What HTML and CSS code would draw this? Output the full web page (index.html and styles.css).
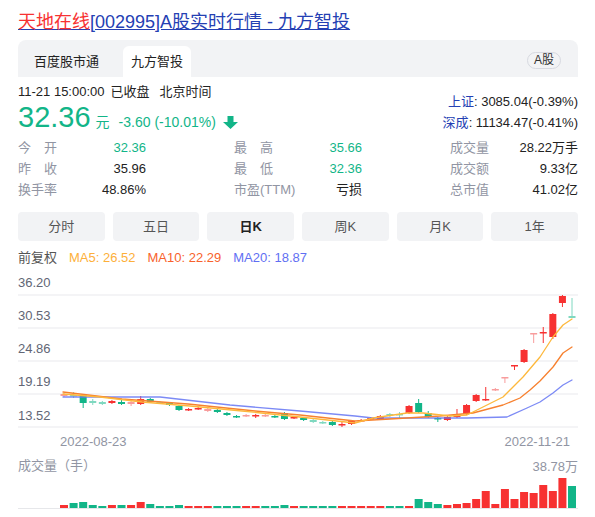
FILE: index.html
```html
<!DOCTYPE html>
<html lang="zh-CN">
<head>
<meta charset="utf-8">
<title>天地在线[002995]A股实时行情 - 九方智投</title>
<link rel="stylesheet" href="styles.css">
</head>
<body>
<div class="page">
  <h3 class="title"><a href="#"><em>天地在线</em>[002995]A股实时行情 - 九方智投</a></h3>
  <div class="tabbar">
    <span class="tab">百度股市通</span>
    <span class="tab active">九方智投</span>
    <span class="badge">A股</span>
  </div>
  <div class="quote">
    <div class="quote-main">
      <div class="time"><span class="t1">11-21 15:00:00</span><span class="t2">已收盘</span><span>北京时间</span></div>
      <div class="price-line">
        <span class="price">32.36</span><span class="unit">元</span><span class="change">-3.60 (-10.01%)</span>
        <svg class="arrow" viewBox="0 0 15 13" width="15" height="13"><path d="M4.5 0h6v6H15L7.5 13 0 6h4.5z"/></svg>
      </div>
    </div>
    <div class="indices">
      <div><span class="idx-name">上证</span>: 3085.04(-0.39%)</div>
      <div><span class="idx-name">深成</span>: 11134.47(-0.41%)</div>
    </div>
  </div>
  <div class="stats">
    <div class="stat"><span class="label">今开</span><span class="value down">32.36</span></div>
    <div class="stat"><span class="label">最高</span><span class="value down">35.66</span></div>
    <div class="stat"><span class="label">成交量</span><span class="value">28.22万手</span></div>
    <div class="stat"><span class="label">昨收</span><span class="value">35.96</span></div>
    <div class="stat"><span class="label">最低</span><span class="value down">32.36</span></div>
    <div class="stat"><span class="label">成交额</span><span class="value">9.33亿</span></div>
    <div class="stat"><span class="label">换手率</span><span class="value">48.86%</span></div>
    <div class="stat"><span class="label wide">市盈(TTM)</span><span class="value">亏损</span></div>
    <div class="stat"><span class="label">总市值</span><span class="value">41.02亿</span></div>
  </div>
  <div class="periods">
    <span class="period">分时</span>
    <span class="period">五日</span>
    <span class="period active">日K</span>
    <span class="period">周K</span>
    <span class="period">月K</span>
    <span class="period">1年</span>
  </div>
  <div class="legend">
    <span class="adj">前复权</span>
    <span class="ma5">MA5: 26.52</span>
    <span class="ma10">MA10: 22.29</span>
    <span class="ma20">MA20: 18.87</span>
  </div>
  <svg class="chart" id="kline" viewBox="18 268 560 244" width="560" height="244">
    <g class="grid">
      <rect x="18" y="294" width="560" height="2"/>
      <rect x="18" y="327" width="560" height="2"/>
      <rect x="18" y="360" width="560" height="2"/>
      <rect x="18" y="393" width="560" height="2"/>
      <rect x="18" y="426" width="560" height="2"/>
    </g>
    <g class="axis">
      <text x="18" y="287">36.20</text>
      <text x="18" y="320">30.53</text>
      <text x="18" y="353">24.86</text>
      <text x="18" y="386">19.19</text>
      <text x="18" y="420">13.52</text>
    </g>
    <g class="axis light">
      <text x="60" y="446">2022-08-23</text>
      <text x="570" y="446" text-anchor="end">2022-11-21</text>
      <text x="18" y="470">成交量（手）</text>
      <text x="578" y="471" text-anchor="end">38.78万</text>
    </g>
    <g id="candles"></g>
    <g class="ma">
      <polyline class="l20" points="63,397 160,397 230,405 300,411 355,416 373,418 467,418 507,417 527,408 540,402 553,393 563,385 572,380"/>
      <polyline class="l10" points="63,392 122,399 188,404 255,411 300,415 355,421 390,419 440,416 473,413 503,405 520,398 530,390 540,381 553,367 563,353 572,347"/>
      <polyline class="l5" points="63,394 100,397 142,402 190,406 242,411 300,417 355,423 373,418 407,413 423,413 450,416 467,415 483,407 503,397 523,377 540,357 553,337 563,325 572,319"/>
    </g>
    <g id="volume"></g>
    <line x1="18" y1="508.5" x2="578" y2="508.5" class="base"/>
  </svg>
</div>
<script src="script.js"></script>
</body>
</html>
```

FILE: styles.css
```css
* { box-sizing: border-box; margin: 0; padding: 0; }
body {
  font-family: "Liberation Sans", "Noto Sans CJK SC", sans-serif;
  font-size: 13px;
  color: #222;
  background: #fff;
}
.page { width: 595px; padding: 9px 17px 0 18px; }
.title { font-size: 18px; font-weight: normal; line-height: 26px; height: 26px; white-space: nowrap; }
.title a { color: #2440b3; text-decoration: underline; }
.title em { font-style: normal; color: #f73131; }

.tabbar {
  margin-top: 5px;
  height: 37px;
  background: #f2f3f5;
  border-radius: 8px 8px 0 0;
  display: flex;
  align-items: flex-end;
  gap: 16px;
  padding: 0 17px 0 8px;
}
.tab { height: 31px; line-height: 31px; padding: 0 8px; font-size: 13px; color: #222; border-radius: 6px 6px 0 0; }
.tab.active { background: #fff; }
.badge {
  margin-left: auto;
  align-self: center;
  margin-top: 4px;
  height: 17px;
  line-height: 15px;
  padding: 0 6px;
  border: 1px solid #d7d9e0;
  border-radius: 9px;
  font-size: 12px;
  color: #333;
}

.quote { margin-top: 6px; display: flex; justify-content: space-between; align-items: flex-end; }
.time { line-height: 18px; font-size: 13px; display: flex; white-space: nowrap; }
.time .t1 { margin-right: 6px; }
.time .t2 { margin-right: 10px; }
.price-line { display: flex; align-items: baseline; height: 32px; color: #12b588; white-space: nowrap; }
.price { font-size: 29px; line-height: 32px; }
.unit { font-size: 14px; margin-left: 5px; }
.change { font-size: 14px; margin-left: 9px; }
.arrow { align-self: flex-end; margin: 0 0 4px 7px; fill: #12b588; }
.indices { text-align: right; line-height: 21px; font-size: 13px; white-space: nowrap; }
.idx-name { color: #2440b3; }

.stats { margin-top: 4px; display: grid; grid-template-columns: repeat(3, 1fr); column-gap: 88px; line-height: 21px; }
.stat { display: flex; justify-content: space-between; white-space: nowrap; }
.label { display: inline-block; width: 39px; color: #9195a3; text-align: justify; text-align-last: justify; }
.label.wide { width: auto; }
.value.down { color: #12b588; }

.periods { margin-top: 12px; display: grid; grid-template-columns: repeat(6, 1fr); gap: 8px; }
.period { height: 29px; line-height: 29px; text-align: center; background: #f2f3f5; border-radius: 4px; color: #555; font-size: 13px; }
.period.active { font-weight: bold; color: #222; }

.legend { margin-top: 7px; line-height: 20px; display: flex; gap: 12px; white-space: nowrap; }
.adj { color: #555; }
.ma5 { color: #fdb03a; }
.ma10 { color: #f8622c; }
.ma20 { color: #5f6ff3; }

.chart { display: block; }
.grid rect { fill: #f4f4f6; }
.axis text { font-family: "Liberation Sans", "Noto Sans CJK SC", sans-serif; font-size: 13px; fill: #626675; }
.axis.light text { fill: #9195a3; }
.ma polyline { fill: none; stroke-width: 1.3; stroke-linejoin: round; stroke-linecap: round; }
.ma .l5 { stroke: #fdb83c; }
.ma .l10 { stroke: #f7812f; }
.ma .l20 { stroke: #6576f3; stroke-opacity: 0.85; }
.base { stroke: #e6e7ea; stroke-width: 1; }
```

FILE: script.js
```js
(function () {
  var NS = 'http://www.w3.org/2000/svg';
  var C = { r: '#f73131', g: '#12b588', p: '#f89c9c', l: '#7fd8c0' };
  var K = [
    ['p',394,396,393,397],['l',395,396,392,398],['g',395,403,394,408],['l',401,403,399,405],
    ['l',402,404,401,405],['r',401,403,400,404],['g',402,404,400,405],['p',402,404,400,406],
    ['r',399,404,396,405],['g',399,402,398,403],['l',402,403,401,404],['g',403,405,402,406],
    ['g',406,410,405,411],['r',409,410,408,411],['r',408,409,407,410],['p',409,411,408,412],
    ['g',410,412,409,413],['g',413,415,412,416],['g',416,417,415,418],['p',415,416,414,417],
    ['r',415,416,414,418],['p',415,416,414,417],['g',416,417,415,418],['g',413,419,412,420],
    ['r',417,418,416,419],['g',418,420,417,421],['l',420,422,419,423],['l',422,423,421,424],
    ['g',422,425,421,426],['r',424,425,422,427],['r',421,424,420,425],['r',420,421,419,422],
    ['r',418,419,417,420],['r',416,419,415,420],['l',414,415,413,417],['l',414,415,412,418],
    ['r',406,413,405,414],['g',403,412,399,413],['g',413,417,411,418],['g',418,419,417,422],
    ['r',417,420,416,421],['r',414,417,409,418],['r',405,414,404,415],['r',395,401,394,402],
    ['r',399,400,387,401],['p',389,390,388,391],['p',377,378,377,383],['r',365,366,365,370],
    ['r',350,362,349,363],['p',333,334,333,343],['r',332,333,327,343],['r',314,337,313,339],
    ['r',296,303,295,307],['l',316,318,298,318]
  ];
  var V = [
    ['r',3],['g',5],['g',6],['g',3],['g',2],['r',3],['g',3],['r',3],['r',6],['g',4],
    ['g',2],['g',2],['g',3],['r',2],['r',1],['r',1],['g',2],['g',2],['g',1],['r',1],
    ['r',1],['g',1],['g',1],['g',3],['r',2],['g',2],['g',1],['g',1],['g',2],['r',1],
    ['r',1],['r',2],['r',2],['r',2],['g',2],['g',2],['r',2],['g',9],['g',6],['g',4],
    ['r',3],['r',4],['r',5],['r',9],['r',17],['r',4],['r',19],['r',9],['r',16],['r',15],
    ['r',23],['r',17],['r',30],['g',22]
  ];
  var step = 9.585;
  function add(parent, tag, attrs) {
    var e = document.createElementNS(NS, tag);
    for (var k in attrs) e.setAttribute(k, attrs[k]);
    parent.appendChild(e);
    return e;
  }
  var cg = document.getElementById('candles');
  K.forEach(function (k, i) {
    var cx = 64 + step * i;
    add(cg, 'rect', { x: cx - 0.5, y: k[3], width: 1, height: k[4] - k[3], fill: C[k[0]] });
    add(cg, 'rect', { x: cx - 3.5, y: k[1], width: 7, height: Math.max(1.5, k[2] - k[1]), fill: C[k[0]] });
  });
  var vg = document.getElementById('volume');
  V.forEach(function (v, i) {
    var h = Math.max(2, v[1]);
    add(vg, 'rect', { x: 60 + step * i, y: 508 - h, width: 8, height: h, fill: C[v[0]] });
  });
})();
```
